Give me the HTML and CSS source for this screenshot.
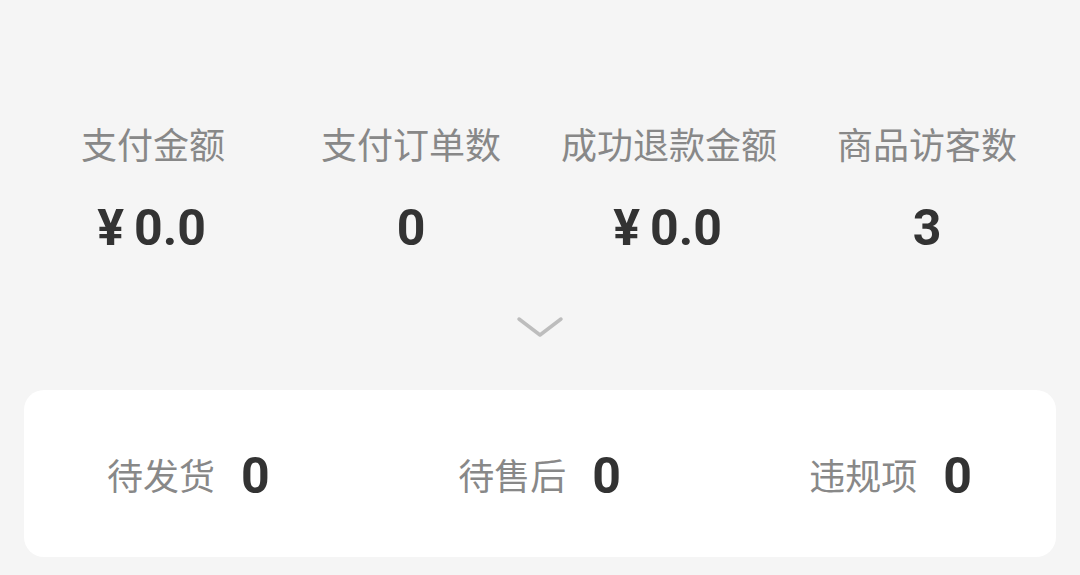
FILE: index.html
```html
<!DOCTYPE html>
<html lang="zh-CN">
<head>
<meta charset="utf-8">
<title>数据概览</title>
<link rel="stylesheet" href="styles.css">
</head>
<body>
<div class="page">
  <section class="stats">
    <div class="stat">
      <div class="stat-label">支付金额</div>
      <div class="stat-value"><span class="yen">¥</span>0.0</div>
    </div>
    <div class="stat">
      <div class="stat-label">支付订单数</div>
      <div class="stat-value">0</div>
    </div>
    <div class="stat">
      <div class="stat-label">成功退款金额</div>
      <div class="stat-value"><span class="yen">¥</span>0.0</div>
    </div>
    <div class="stat">
      <div class="stat-label">商品访客数</div>
      <div class="stat-value">3</div>
    </div>
  </section>
  <div class="toggle">
    <svg class="chevron" width="50" height="26" viewBox="0 0 50 26">
      <polyline points="4,5 25,21 46,5" fill="none" stroke="#bdbdbd" stroke-width="3.5" stroke-linecap="round" stroke-linejoin="round"/>
    </svg>
  </div>
  <section class="card">
    <div class="todo">
      <span class="todo-label">待发货</span>
      <span class="todo-value">0</span>
    </div>
    <div class="todo">
      <span class="todo-label">待售后</span>
      <span class="todo-value">0</span>
    </div>
    <div class="todo">
      <span class="todo-label">违规项</span>
      <span class="todo-value">0</span>
    </div>
  </section>
</div>
</body>
</html>
```
FILE: styles.css
```css
html, body {
  margin: 0;
  padding: 0;
  background: #f5f5f5;
}
body {
  font-family: "Noto Sans CJK SC", "Noto Sans", sans-serif;
  width: 1080px;
  height: 575px;
  overflow: hidden;
}
.page {
  padding-top: 121px;
}
.stats {
  display: grid;
  grid-template-columns: repeat(4, 1fr);
  margin: 0 24px;
}
.stat {
  text-align: center;
}
.stat-label {
  font-size: 36px;
  line-height: 44px;
  color: #888888;
  white-space: nowrap;
}
.stat-value {
  margin-top: 33px;
  font-family: Roboto, "Liberation Sans", sans-serif;
  font-weight: 700;
  font-size: 50px;
  line-height: 60px;
  color: #333333;
}
.yen {
  margin-right: 10px;
  margin-left: -3px;
}
.toggle {
  margin-top: 56px;
  height: 26px;
  display: flex;
  justify-content: center;
}
.chevron {
  display: block;
}
.card {
  margin: 50px 24px 0;
  height: 167px;
  background: #ffffff;
  border-radius: 20px;
  display: flex;
  align-items: center;
  justify-content: space-between;
  padding: 0 84px 0 83px;
}
.todo {
  display: flex;
  align-items: center;
  gap: 26px;
}
.todo-label {
  font-size: 36px;
  line-height: 44px;
  color: #888888;
}
.todo-value {
  font-family: Roboto, "Liberation Sans", sans-serif;
  font-weight: 700;
  font-size: 50px;
  line-height: 60px;
  color: #333333;
  padding-top: 4px;
}
```
